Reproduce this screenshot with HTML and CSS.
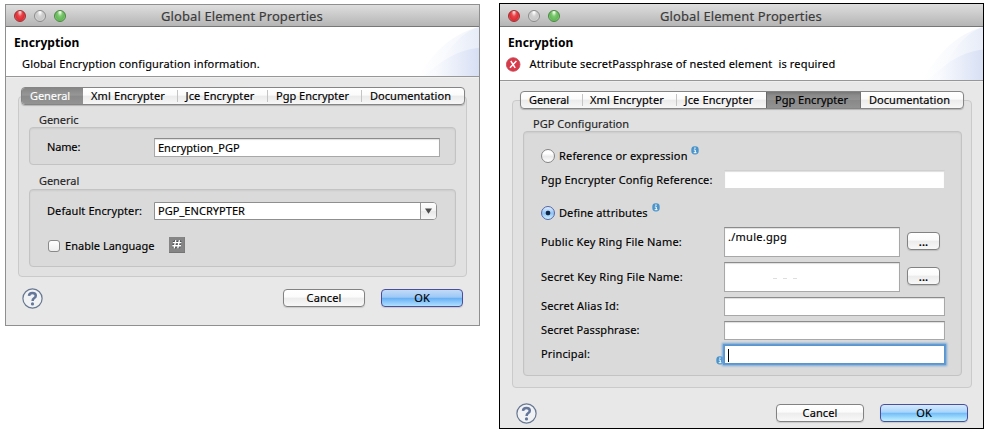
FILE: index.html
```
<!DOCTYPE html>
<html lang="en">
<head>
<meta charset="utf-8">
<title>Global Element Properties</title>
<link rel="stylesheet" href="styles.css">
</head>
<body>
<svg class="defs" aria-hidden="true">
  <defs>
    <linearGradient id="swooshA" x1="0" x2="1"><stop offset="0" stop-color="#fff"/><stop offset="1" stop-color="#e4eaf7"/></linearGradient>
    <linearGradient id="swooshB" x1="0" x2="1"><stop offset="0" stop-color="#f8fafe" stop-opacity=".2"/><stop offset="1" stop-color="#d7dff4"/></linearGradient>
    <symbol id="help" viewBox="0 0 21 21">
      <circle cx="10.5" cy="10.5" r="9.6" fill="#f1f2f4" stroke="#687892" stroke-width="1.2"/>
      <path d="M7 7.8Q7.2 5 10.4 5Q13.8 5 13.8 7.8Q13.8 9.2 12 10.3Q10.6 11.2 10.6 12.9" fill="none" stroke="#64779a" stroke-width="2.5"/>
      <circle cx="10.5" cy="15.9" r="1.6" fill="#64779a"/>
    </symbol>
    <symbol id="info" viewBox="0 0 8 9">
      <rect x=".3" y=".3" width="7.4" height="8.2" rx="3.4" fill="#4b94cb"/>
      <path d="M3.1 2.1H4.8M2.8 4H4.3V6.6M2.7 6.7H5.5" fill="none" stroke="#fff" stroke-width="1"/>
    </symbol>
    <symbol id="swoosh" viewBox="0 0 80 52" preserveAspectRatio="none">
      <path d="M10 52C24 32 44 8 80 0V52Z" fill="url(#swooshA)" opacity=".5"/>
      <path d="M26 52C38 32 56 6 80 0V52Z" fill="url(#swooshA)" opacity=".8"/>
      <path d="M16 52C32 40 50 25 80 22V52Z" fill="url(#swooshB)"/>
    </symbol>
  </defs>
</svg>

<main class="stage">
  <section class="window first">
    <header class="titlebar">
      <div class="lights"><i class="light red"></i><i class="light grey"></i><i class="light green"></i></div>
      <h1>Global Element Properties</h1>
    </header>
    <div class="banner">
      <h2>Encryption</h2>
      <p class="message wide">Global Encryption configuration information.</p>
      <svg class="swoosh"><use href="#swoosh"/></svg>
    </div>
    <div class="body">
      <div class="panel">
        <nav class="tabs">
          <span class="tab active">General</span><span class="tab xml">Xml Encrypter</span><span class="tab jce">Jce Encrypter</span><span class="tab pgp">Pgp Encrypter</span><span class="tab doc">Documentation</span>
        </nav>
        <h3>Generic</h3>
        <div class="group generic">
          <label class="name">Name:</label>
          <div class="field">Encryption_PGP</div>
        </div>
        <h3 class="second">General</h3>
        <div class="group general">
          <div class="line combo-line">
            <label>Default Encrypter:</label>
            <div class="combo"><span>PGP_ENCRYPTER</span><b><svg width="9" height="6" viewBox="0 0 9 6"><path d="M1 .5H8L4.5 5.8Z" fill="#4c4c4c"/></svg></b></div>
          </div>
          <div class="line check-line">
            <i class="checkbox"></i>
            <label>Enable Language</label>
            <svg class="hash" width="16" height="16" viewBox="0 0 16 16"><rect width="16" height="16" fill="#858585"/><path d="M0 15.5H16V0" fill="none" stroke="#747474"/><path d="M6.8 3.2L5.2 11.4M10.4 3.2L8.8 11.4M3.8 5.6H12.4M3.3 8.8H12" fill="none" stroke="#4b5054" stroke-width="3"/><path d="M6.8 3.2L5.2 11.4M10.4 3.2L8.8 11.4M3.8 5.6H12.4M3.3 8.8H12" fill="none" stroke="#fff" stroke-width="1.4"/></svg>
          </div>
        </div>
      </div>
      <footer class="actions">
        <svg class="help"><use href="#help"/></svg>
        <button class="btn cancel">Cancel</button>
        <button class="btn ok">OK</button>
      </footer>
    </div>
  </section>

  <section class="window last">
    <header class="titlebar">
      <div class="lights"><i class="light red"></i><i class="light grey"></i><i class="light green"></i></div>
      <h1>Global Element Properties</h1>
    </header>
    <div class="banner">
      <h2>Encryption</h2>
      <p class="message error"><svg width="15" height="15" viewBox="0 0 15 15"><circle cx="7.2" cy="7.5" r="6.8" fill="#d93a49" stroke="#bd4953" stroke-width=".8"/><path d="M4.8 4L9.2 10.8M10.4 4L4 10.8" stroke="#fff" stroke-width="1.5"/></svg><span>Attribute secretPassphrase of nested element&nbsp; is required</span></p>
      <svg class="swoosh"><use href="#swoosh"/></svg>
    </div>
    <div class="body">
      <div class="panel">
        <nav class="tabs">
          <span class="tab gen">General</span><span class="tab xml">Xml Encrypter</span><span class="tab jce">Jce Encrypter</span><span class="tab pgp active">Pgp Encrypter</span><span class="tab doc">Documentation</span>
        </nav>
        <h3>PGP Configuration</h3>
        <div class="group pgp-form">
          <div class="line radio-line"><i class="radio"></i><label class="w17">Reference or expression</label><svg class="info"><use href="#info"/></svg></div>
          <div class="line h24 config"><label class="w14">Pgp Encrypter Config Reference:</label><div class="field plain"></div></div>
          <div class="line radio-line define"><i class="radio on"></i><label class="w08">Define attributes</label><svg class="info"><use href="#info"/></svg></div>
          <div class="line h35"><label class="w20">Public Key Ring File Name:</label><div class="field area">./mule.gpg</div><button class="btn more">...</button></div>
          <div class="line h35"><label class="w20">Secret Key Ring File Name:</label><div class="field area"><span class="marks"><i></i><i></i><i></i></span></div><button class="btn more">...</button></div>
          <div class="line h24"><label class="w17">Secret Alias Id:</label><div class="field"></div></div>
          <div class="line h24"><label class="w10">Secret Passphrase:</label><div class="field"></div></div>
          <div class="line h24"><label class="w14">Principal:</label><svg class="info small"><use href="#info"/></svg><div class="field focus"><i class="caret"></i></div></div>
        </div>
      </div>
      <footer class="actions">
        <svg class="help"><use href="#help"/></svg>
        <button class="btn cancel">Cancel</button>
        <button class="btn ok">OK</button>
      </footer>
    </div>
  </section>
</main>
</body>
</html>
```
FILE: styles.css
```
* { box-sizing: border-box; }
body {
  margin: 0;
  background: #fff;
  color: #000;
  font: 11px/15px "Noto Sans", "Lucida Grande", sans-serif;
  -webkit-text-stroke: .15px currentColor;
}
h1, h2, h3, p { margin: 0; font-weight: 400; }
i { font-style: normal; display: block; }
.defs { position: absolute; width: 0; height: 0; }

.stage {
  width: 987px;
  height: 432px;
  padding: 3px 3px 0 5px;
  display: flex;
  justify-content: space-between;
  align-items: flex-start;
  overflow: hidden;
}
.window { display: flex; flex-direction: column; white-space: nowrap; }
.first { width: 475px; height: 322px; margin-top: 1px; border: 1px solid #8f8f8f; }
.last { width: 485px; height: 426px; border: 1px solid #000; }

.titlebar {
  position: relative;
  flex: none;
  height: 22px;
  border-bottom: 1px solid #777;
  background: linear-gradient(#dedede, #b5b5b5);
}
.last .titlebar { height: 23px; }
.titlebar h1 {
  font-size: 13px;
  line-height: 22px;
  letter-spacing: .1px;
  color: #3b3b3b;
  padding-left: 155px;
}
.last .titlebar h1 { padding-left: 160px; line-height: 24px; }
.lights { position: absolute; left: 8px; top: 5px; display: flex; gap: 8px; }
.last .lights { top: 6px; }
.light {
  width: 12px;
  height: 12px;
  border-radius: 50%;
  border: 1px solid #8b8b8b;
  background: radial-gradient(ellipse at 50% 10%, #fff 5%, #d2d2d2 35%, #c8c8c8 60%, #f0f0f0);
}
.red { border-color: #9a3034; background: radial-gradient(ellipse at 50% 10%, #ffd3d3 5%, #e8474c 35%, #dd2c32 65%, #ff9b9b); }
.green { border-color: #4c8543; background: radial-gradient(ellipse at 50% 10%, #f0ffe9 5%, #7dc870 35%, #62b857 65%, #c5f8ad); }

.banner {
  position: relative;
  flex: none;
  height: 50px;
  border-bottom: 1px solid #979797;
  background: #fff;
}
.last .banner { height: 54px; }
.banner h2 {
  padding: 8px 0 0 8px;
  font-size: 12px;
  font-weight: 700;
  letter-spacing: .08px;
  -webkit-text-stroke: 0;
}
.message { position: relative; z-index: 1; }
.message.wide { padding: 6px 0 0 16px; letter-spacing: .15px; }
.message.error { display: flex; gap: 8.5px; padding: 7px 0 0 6px; letter-spacing: .16px; }
.message.error span { margin-top: -1px; }
.swoosh { position: absolute; right: 0; bottom: 0; width: 69px; height: 49px; }
.last .swoosh { height: 53px; }

.body { flex: 1; background: #e8e8e8; padding: 18px 12px 0; border-top: 1px solid #efefef; }
.last .body { padding: 18px 11px 0 12px; }
.panel {
  height: 181px;
  border: 1px solid #cacaca;
  border-radius: 4px;
  background: #e1e1e1;
  padding: 0 10px;
}
.last .panel { height: 288px; }
.tabs {
  display: flex;
  height: 18px;
  width: 444px;
  margin: -10px 0 0 -8px;
  border: 1px solid #858585;
  border-radius: 4px;
  background: linear-gradient(#fff, #fbfbfb 45%, #ebebeb 50%, #f7f7f7);
  box-shadow: 0 1px 1px #0003;
  overflow: hidden;
}
.last .tabs { margin-left: -3px; }
.tab {
  position: relative;
  flex: none;
  line-height: 16px;
  padding-left: 8px;
  letter-spacing: .02px;
}
.tab + .tab::before { content: ""; position: absolute; left: 0; top: 2px; width: 1px; height: 12px; background: #c4c4c4; }
.first .tab.active {
  width: 61px;
  color: #fff;
  letter-spacing: -.08px;
  background: linear-gradient(#858585, #979797 45%, #8a8a8a 50%, #939393);
}
.gen { width: 61px; letter-spacing: -.06px; }
.xml { width: 94px; letter-spacing: .13px; }
.jce { width: 90px; letter-spacing: .14px; padding-left: 8.5px; }
.pgp { width: 94px; padding-left: 9px; }
.last .pgp { width: 95px; }
.doc { padding-left: 9px; letter-spacing: .04px; }
.last .doc { padding-left: 8px; }
.first .tab.active + .tab::before, .last .active::before, .last .active + .tab::before { display: none; }
.last .tab.active { background: linear-gradient(#777, #8b8b8b 20%, #929292 48%, #888 50%, #929292); box-shadow: inset 1px 0 #686868, inset -1px 0 #747474; }

h3 { font-size: 11px; padding: 8px 0 0 10px; line-height: 14px; letter-spacing: -.05px; color: #262626; }
h3.second { padding-top: 9px; }
.last h3 { letter-spacing: .03px; padding-top: 8px; }
.group { border: 1px solid #c3c3c3; border-radius: 4px; background: #dadada; box-shadow: inset 0 1px 2px #0001; }
.generic { height: 38px; width: 427px; padding: 10px 15px 0 17px; display: flex; }
.generic label { width: 107px; line-height: 18px; letter-spacing: -.15px; }
.generic .field { width: 286px; }
.general { height: 78px; width: 427px; margin-top: 1px; padding: 12px 0 0 17px; }
.line { display: flex; }
.field {
  height: 19px;
  border: 1px solid #a8a8a8;
  border-top-color: #8b8b8b;
  background: #fff;
  box-shadow: inset 0 1px 1px #0002;
  line-height: 18px;
  padding-left: 3px;
}
.combo-line label { width: 107px; line-height: 18px; letter-spacing: .09px; }
.combo {
  display: flex;
  justify-content: space-between;
  width: 283px;
  height: 18px;
  border: 1px solid #8f8f8f;
  border-radius: 0 4px 4px 0;
  background: #fff;
  overflow: hidden;
}
.combo span { padding-left: 3px; line-height: 16px; letter-spacing: .04px; }
.combo b { width: 16px; border-left: 1px solid #999; background: linear-gradient(#fff, #f3f3f3 48%, #e8e8e8 50%, #f7f7f7); display: flex; align-items: center; justify-content: center; }
.check-line { margin-top: 17px; height: 17px; align-items: center; }
.checkbox { width: 12px; height: 12px; border: 1px solid #898989; border-radius: 3px; background: linear-gradient(#fff, #eee); margin: 0 5px 0 1px; }
.check-line label { letter-spacing: .02px; width: 104px; }
.hash { margin-top: -1px; }

.actions { display: flex; align-items: center; height: 21px; margin-top: 11px; padding: 0 4px; }
.last .actions { margin-top: 15px; }
.help { width: 21px; height: 21px; margin-right: auto; }
.btn {
  flex: none;
  height: 18px;
  padding: 0;
  border: 1px solid #828282;
  border-radius: 4px;
  background: linear-gradient(#fff, #fbfbfb 45%, #ececec 50%, #f8f8f8);
  box-shadow: 0 1px 1px #0002;
  color: #000;
  font: inherit;
  line-height: 16px;
  letter-spacing: .1px;
}
.actions .btn { margin-top: -1px; }
.cancel, .ok { width: 82px; }
.actions .ok { margin-left: 16px; border-color: #4a4e9d; background: linear-gradient(#c2dbf8, #9cc8f6 46%, #66aef4 50%, #b0e0ff); }
.last .actions .ok { background: linear-gradient(#d5eaff, #a8d4fb 46%, #70bbf8 50%, #c2f3ff); }
.last .cancel, .last .ok { width: 88px; }

.pgp-form { width: 439px; height: 245px; padding: 14px 0 0 17px; }
.radio-line { height: 19px; align-items: center; }
.radio { width: 14px; height: 14px; border: 1px solid #858585; border-radius: 50%; background: linear-gradient(#fff 30%, #eaeaea 55%, #fff); margin-right: 4px; }
.radio.on { border-color: #5264a8; background: radial-gradient(circle, #102747 0 2px, #0000 2.7px), linear-gradient(#e2effd, #8fc1f4 52%, #cff0ff); }
.info { flex: none; width: 8px; height: 9px; margin: -11px 0 0 3px; }
.define { margin: 9px 0 5px; }
.define .info { margin-left: 4px; margin-top: -10px; }
.pgp-form .line:not(.radio-line) label { width: 183px; flex: none; }
.h24 { height: 24px; }
.h24 label { line-height: 18px; }
.h24 .field { width: 221px; }
.config { margin-top: 5px; }
.config label { line-height: 19px; }
.h24 .field.plain { border-color: #cfcfcf #dadada #dadada; }
.h35 { height: 35px; }
.h35 label { line-height: 30px; }
.h35 .field { width: 176px; height: 30px; line-height: 18px; letter-spacing: .26px; }
.h35 .more { margin: 5px 0 0 7px; width: 33px; font-weight: 600; line-height: 17px; }
.w08 { letter-spacing: .08px; }
.w10 { letter-spacing: .1px; }
.w14 { letter-spacing: .14px; }
.w17 { letter-spacing: .17px; }
.w20 { letter-spacing: .2px; }
.marks { display: flex; gap: 6px; padding: 15px 0 0 45px; }
.marks i { width: 4px; height: 1px; background: #dedede; }
.pgp-form .line .info.small { margin: 11px 0 0 -8px; }
.field.focus { border-color: #5c94cb; box-shadow: 0 0 0 1px #609cd5, 0 0 2px 2px #76a9d9; }
.caret { width: 1px; height: 13px; margin-top: 3px; background: #000; }
```
